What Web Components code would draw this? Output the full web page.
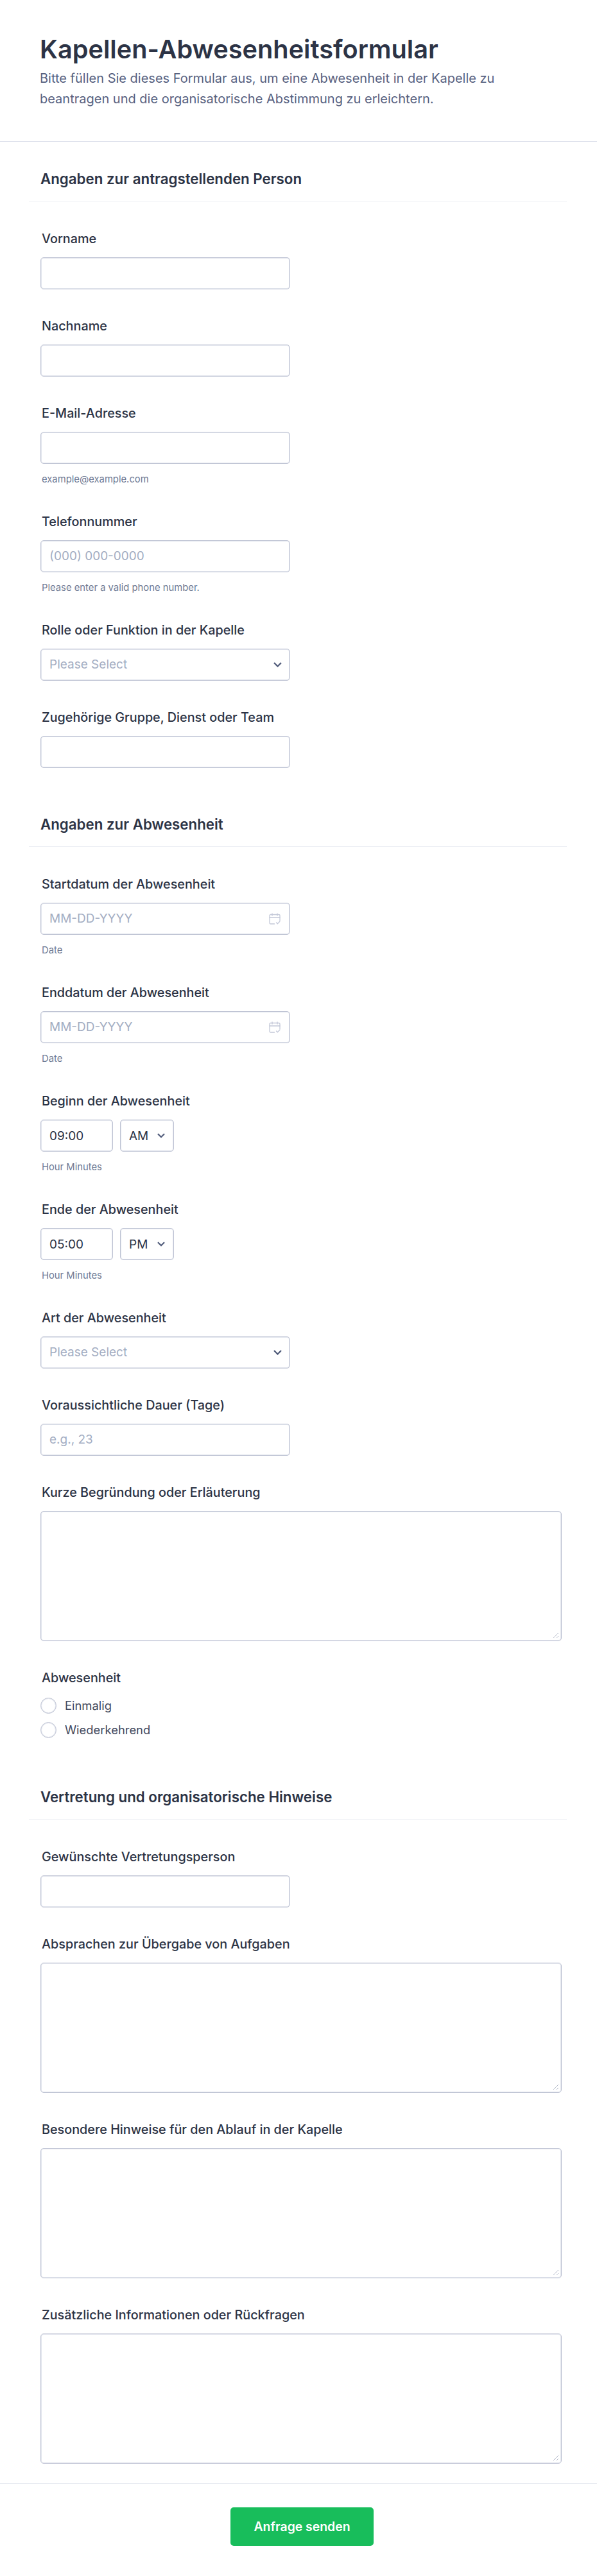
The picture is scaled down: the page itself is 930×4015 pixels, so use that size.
<!DOCTYPE html>
<html lang="de">
<head>
<meta charset="utf-8">
<title>Kapellen-Abwesenheitsformular</title>
<style>
  html, body { margin: 0; background: #fff; }
  body { font-family: Inter, "Liberation Sans", sans-serif; color: #2c3345; }
</style>
</head>
<body>

<form-header
  title-text="Kapellen-Abwesenheitsformular"
  sub-text="Bitte füllen Sie dieses Formular aus, um eine Abwesenheit in der Kapelle zu beantragen und die organisatorische Abstimmung zu erleichtern."></form-header>

<form-page>
  <form-section heading="Angaben zur antragstellenden Person">
    <form-field label="Vorname"><text-box></text-box></form-field>
    <form-field label="Nachname"><text-box></text-box></form-field>
    <form-field label="E-Mail-Adresse" hint="example@example.com"><text-box></text-box></form-field>
    <form-field label="Telefonnummer" hint="Please enter a valid phone number."><text-box placeholder="(000) 000-0000"></text-box></form-field>
    <form-field label="Rolle oder Funktion in der Kapelle"><select-box placeholder="Please Select"></select-box></form-field>
    <form-field label="Zugehörige Gruppe, Dienst oder Team"><text-box></text-box></form-field>
  </form-section>

  <form-section heading="Angaben zur Abwesenheit">
    <form-field label="Startdatum der Abwesenheit" hint="Date"><text-box placeholder="MM-DD-YYYY" calendar></text-box></form-field>
    <form-field label="Enddatum der Abwesenheit" hint="Date"><text-box placeholder="MM-DD-YYYY" calendar></text-box></form-field>
    <form-field label="Beginn der Abwesenheit" hint="Hour Minutes"><time-box time="09:00" period="AM"></time-box></form-field>
    <form-field label="Ende der Abwesenheit" hint="Hour Minutes"><time-box time="05:00" period="PM"></time-box></form-field>
    <form-field label="Art der Abwesenheit"><select-box placeholder="Please Select"></select-box></form-field>
    <form-field label="Voraussichtliche Dauer (Tage)"><text-box placeholder="e.g., 23"></text-box></form-field>
    <form-field label="Kurze Begründung oder Erläuterung"><area-box></area-box></form-field>
    <form-field label="Abwesenheit" tight>
      <radio-item>Einmalig</radio-item>
      <radio-item>Wiederkehrend</radio-item>
    </form-field>
  </form-section>

  <form-section heading="Vertretung und organisatorische Hinweise">
    <form-field label="Gewünschte Vertretungsperson"><text-box></text-box></form-field>
    <form-field label="Absprachen zur Übergabe von Aufgaben"><area-box></area-box></form-field>
    <form-field label="Besondere Hinweise für den Ablauf in der Kapelle"><area-box></area-box></form-field>
    <form-field label="Zusätzliche Informationen oder Rückfragen"><area-box></area-box></form-field>
  </form-section>
</form-page>

<form-footer>Anfrage senden</form-footer>

<script>
class FormHeader extends HTMLElement {
    connectedCallback() {
        this.attachShadow({ mode: 'open' });
        this.shadowRoot.innerHTML = `
            <style>
                :host { display: block; box-sizing: border-box; height: 221px; padding: 50px 62px 0; border-bottom: 1px solid #dfe2ec; }
                h1 { margin: 0 0 2px; font-size: 39.7px; line-height: 54px; font-weight: 600; color: #2c3345; }
                p { margin: 0; width: 730px; font-size: 20px; line-height: 32px; color: #57617f; }
            </style>
            <h1>${this.getAttribute('title-text')}</h1>
            <p>${this.getAttribute('sub-text')}</p>
        `;
    }
}

class FormPage extends HTMLElement {
    connectedCallback() {
        this.attachShadow({ mode: 'open' });
        this.shadowRoot.innerHTML = `
            <style>
                :host { display: block; padding: 43px 47px 0 45px; }
            </style>
            <slot></slot>
        `;
    }
}

class FormSection extends HTMLElement {
    connectedCallback() {
        this.attachShadow({ mode: 'open' });
        this.shadowRoot.innerHTML = `
            <style>
                :host { display: block; }
                :host(:not(:first-child)) { margin-top: 73px; }
                h2 { margin: 0; padding: 0 18px 19px; font-size: 22.3px; line-height: 30px; font-weight: 600; color: #2c3345; border-bottom: 1px solid #eceef3; }
                .fields { display: flex; flex-direction: column; gap: 44px; padding-top: 45px; }
            </style>
            <h2>${this.getAttribute('heading')}</h2>
            <div class="fields"><slot></slot></div>
        `;
    }
}

class FormField extends HTMLElement {
    connectedCallback() {
        const hint = this.getAttribute('hint');
        this.attachShadow({ mode: 'open' });
        this.shadowRoot.innerHTML = `
            <style>
                :host { display: block; padding-left: 18px; }
                label { display: block; margin: 0 0 16px 2px; font-size: 19.8px; line-height: 26px; font-weight: 500; color: #2c3345; }
                :host([tight]) { margin-bottom: -2px; }
                :host([tight]) label { margin-bottom: 11px; }
                .hint { margin: 15px 0 0 2px; font-size: 14.8px; line-height: 18px; color: #6f7a94; }
            </style>
            <label>${this.getAttribute('label')}</label>
            <slot></slot>
            ${hint ? `<div class="hint">${hint}</div>` : ''}
        `;
    }
}

// soft double edge: the reference borders read about 2px wide and pale
const boxStyle = `
    box-sizing: border-box;
    border: 1px solid #bfc4d4;
    box-shadow: inset 0 0 0 1px #e2e5ed;
    border-radius: 5px;
    background: #fff;
    font-family: inherit;
    font-size: 19px;
    color: #2c3345;
`;

const calendarIcon = `
    <svg width="18" height="18" viewBox="0 0 18 18" fill="none" stroke="#c3c8d8" stroke-width="1.3" stroke-linecap="round">
        <path d="M8.500 17H2.500A1.500 1.500 0 0 1 1 15.500V4A1.500 1.500 0 0 1 2.500 2.500h13A1.500 1.500 0 0 1 17 4v8"/>
        <path d="M1 7h16M5 1v3M13 1v3M11.500 15l1.800 1.800 3.500-3.500"/>
    </svg>
`;

const chevron = `<svg width="13" height="8" viewBox="0 0 13 8" fill="none" stroke="#505b7a" stroke-width="2.300"><path d="M1 1l5.500 5.500L12 1"/></svg>`;

class TextBox extends HTMLElement {
    connectedCallback() {
        const placeholder = this.getAttribute('placeholder') || '';
        this.attachShadow({ mode: 'open' });
        this.shadowRoot.innerHTML = `
            <style>
                :host { display: block; width: 389px; height: 50px; ${boxStyle} padding: 0 14px 0 13px; }
                .wrap { display: flex; align-items: center; justify-content: space-between; height: 100%; }
                span { color: #a3adc2; line-height: 24px; }
                svg { display: block; }
            </style>
            <div class="wrap">
                <span>${placeholder}</span>
                ${this.hasAttribute('calendar') ? calendarIcon : ''}
            </div>
        `;
    }
}

class SelectBox extends HTMLElement {
    connectedCallback() {
        this.attachShadow({ mode: 'open' });
        this.shadowRoot.innerHTML = `
            <style>
                :host { display: block; width: 389px; height: 50px; ${boxStyle} padding: 0 12px 0 13px; }
                .wrap { display: flex; align-items: center; justify-content: space-between; height: 100%; }
                span { color: #a3adc2; line-height: 24px; }
                svg { display: block; }
            </style>
            <div class="wrap">
                <span>${this.getAttribute('placeholder')}</span>
                ${chevron}
            </div>
        `;
    }
}

class TimeBox extends HTMLElement {
    connectedCallback() {
        this.attachShadow({ mode: 'open' });
        this.shadowRoot.innerHTML = `
            <style>
                :host { display: flex; gap: 11px; }
                .cell { height: 50px; ${boxStyle} display: flex; align-items: center; padding: 0 13px; }
                .time { width: 113px; }
                .period { width: 84px; justify-content: space-between; padding-right: 13px; }
                svg { width: 12px; height: 8px; }
            </style>
            <div class="cell time">${this.getAttribute('time')}</div>
            <div class="cell period">
                <span>${this.getAttribute('period')}</span>
                ${chevron}
            </div>
        `;
    }
}

class AreaBox extends HTMLElement {
    connectedCallback() {
        this.attachShadow({ mode: 'open' });
        this.shadowRoot.innerHTML = `
            <style>
                :host { display: block; position: relative; width: 812px; height: 203px; ${boxStyle} }
                svg { position: absolute; right: 3px; bottom: 3px; }
            </style>
            <svg width="10" height="10" viewBox="0 0 10 10" fill="none" stroke="#b4bac9" stroke-width="1"><path d="M1 9l8-8M6 9l3-3"/></svg>
        `;
    }
}

class RadioItem extends HTMLElement {
    connectedCallback() {
        this.attachShadow({ mode: 'open' });
        this.shadowRoot.innerHTML = `
            <style>
                :host { display: flex; align-items: center; gap: 13px; height: 38px; font-size: 18.400px; color: #434a60; }
                i { box-sizing: border-box; width: 25px; height: 25px; border: 1px solid #bfc4d4; box-shadow: inset 0 0 0 1px #e2e5ed; border-radius: 50%; background: #fff; }
            </style>
            <i></i><span><slot></slot></span>
        `;
    }
}

class FormFooter extends HTMLElement {
    connectedCallback() {
        this.attachShadow({ mode: 'open' });
        this.shadowRoot.innerHTML = `
            <style>
                :host { display: flex; justify-content: center; box-sizing: border-box; height: 147px; margin-top: 30px; padding: 37px 0 0 11px; border-top: 1px solid #dfe2ec; }
                button { width: 223px; height: 60px; border: 0; border-radius: 5px; background: #18bd5b; color: #fff; font-family: inherit; font-size: 19.400px; font-weight: 600; }
            </style>
            <button type="button"><slot></slot></button>
        `;
    }
}

customElements.define('form-header', FormHeader);
customElements.define('form-page', FormPage);
customElements.define('form-section', FormSection);
customElements.define('form-field', FormField);
customElements.define('text-box', TextBox);
customElements.define('select-box', SelectBox);
customElements.define('time-box', TimeBox);
customElements.define('area-box', AreaBox);
customElements.define('radio-item', RadioItem);
customElements.define('form-footer', FormFooter);
</script>
</body>
</html>
